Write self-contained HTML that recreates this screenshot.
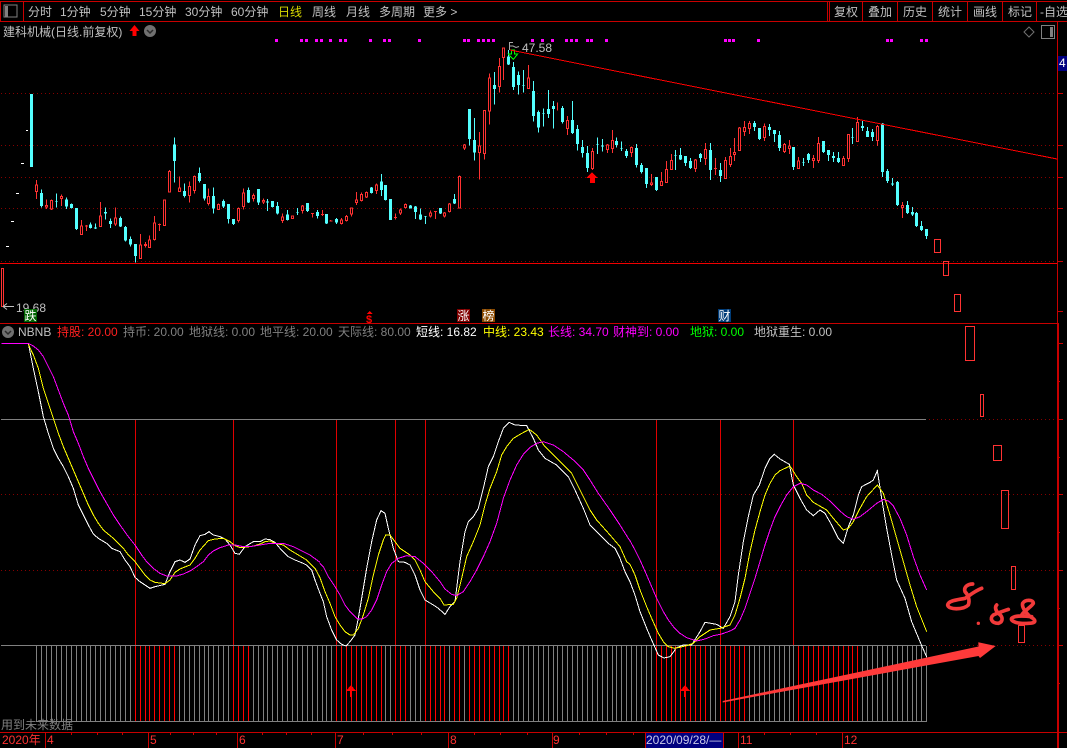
<!DOCTYPE html>
<html lang="zh">
<head>
<meta charset="utf-8">
<title>建科机械</title>
<style>
html,body{margin:0;padding:0;background:#000;width:1067px;height:748px;overflow:hidden}
svg{display:block}
text{font-family:"Liberation Sans","WenQuanYi Zen Hei","Noto Sans CJK SC",sans-serif;font-size:12px;fill:#c0c0c0;white-space:pre}
.c{shape-rendering:crispEdges}
</style>
</head>
<body>
<svg width="1067" height="748" viewBox="0 0 1067 748" xmlns="http://www.w3.org/2000/svg">
<rect width="1067" height="748" fill="#000"/>

<!-- frame / toolbar -->
<g class="c" fill="none" stroke="#c80000">
<path d="M0 1.500H1067M0 21.500H1067M0.500 1V21M23.500 1V21M827.500 2V21M829.500 2V21M862.500 2V21M897.500 2V21M932.500 2V21M967.500 2V21M1002.500 2V21M1036.500 2V21"/>
<path d="M1057.500 22V323"/>
<path d="M0 323.500H1058"/>
<path d="M1058 323V748" stroke-width="2"/>
<path d="M0 263.500H1057" stroke="#f00000"/>
<path d="M0 732.500H1067"/>
<path d="M45.500 732V748M148.500 732V748M237.500 732V748M335.500 732V748M448.500 732V748M552.500 732V748M645.500 732V748M723.500 732V748M738.500 732V748M842.500 732V748"/>
<path d="M71.500 732V735M97.500 732V735M122.500 732V735M170.500 732V735M193.500 732V735M216.500 732V735M262.500 732V735M286.500 732V735M311.500 732V735M363.500 732V735M392.500 732V735M421.500 732V735M474.500 732V735M500.500 732V735M527.500 732V735M579.500 732V735M606.500 732V735M633.500 732V735M764.500 732V735M790.500 732V735M816.500 732V735"/>
<path d="M1058 93.500H1063M1058 145.500H1063M1058 177.500H1063M1058 208.500H1063M1058 261.500H1063M1058 311.500H1063M1058 343.500H1063M1058 381.500H1060M1058 419.500H1063M1058 457.500H1060M1058 494.500H1063M1058 532.500H1060M1058 570.500H1063M1058 608.500H1060M1058 645.500H1063M1058 683.500H1060"/>
</g>

<!-- toolbar icon -->
<g class="c">
<rect x="4" y="5" width="13" height="12" fill="none" stroke="#808080"/>
<rect x="5" y="6" width="3" height="11" fill="#808080"/>
</g>

<!-- toolbar text -->
<text x="28" y="16">分时</text>
<text x="60" y="16">1分钟</text>
<text x="100" y="16">5分钟</text>
<text x="139" y="16">15分钟</text>
<text x="185" y="16">30分钟</text>
<text x="231" y="16">60分钟</text>
<text x="278" y="16" style="fill:#d8d800">日线</text>
<text x="312" y="16">周线</text>
<text x="346" y="16">月线</text>
<text x="379" y="16">多周期</text>
<text x="423" y="16">更多 &gt;</text>
<text x="834" y="16">复权</text>
<text x="868" y="16">叠加</text>
<text x="903" y="16">历史</text>
<text x="938" y="16">统计</text>
<text x="973" y="16">画线</text>
<text x="1008" y="16">标记</text>
<text x="1040" y="16">-自选</text>

<!-- title row -->
<text x="3" y="36">建科机械(日线.前复权)</text>
<path d="M134.500 25L139.500 31H136.500V36H132.500V31H129.500Z" fill="#f00"/>
<circle cx="150" cy="31" r="6" fill="#707070"/>
<path d="M147 30L150 33L153 30" fill="none" stroke="#2a2a2a" stroke-width="1.500"/>
<path d="M1029 27L1034 32L1029 37L1024 32Z" fill="none" stroke="#707070"/>
<g class="c">
<rect x="1041.500" y="25.500" width="13" height="13" fill="none" stroke="#808080"/>
<rect x="1050" y="27" width="3" height="10" fill="#808080"/>
</g>

<!-- magenta dots -->
<path class="c" fill="#f0f" d="M275 39h3v3h-3zM300 39h3v3h-3zM305 39h3v3h-3zM315 39h3v3h-3zM320 39h3v3h-3zM329 39h3v3h-3zM339 39h3v3h-3zM344 39h3v3h-3zM369 39h3v3h-3zM383 39h3v3h-3zM388 39h3v3h-3zM418 39h3v3h-3zM463 39h3v3h-3zM467 39h3v3h-3zM477 39h3v3h-3zM482 39h3v3h-3zM487 39h3v3h-3zM492 39h3v3h-3zM531 39h3v3h-3zM541 39h3v3h-3zM551 39h3v3h-3zM565 39h3v3h-3zM570 39h3v3h-3zM575 39h3v3h-3zM586 39h3v3h-3zM590 39h3v3h-3zM605 39h3v3h-3zM724 39h3v3h-3zM728 39h3v3h-3zM732 39h3v3h-3zM757 39h3v3h-3zM886 39h3v3h-3zM890 39h3v3h-3zM920 39h3v3h-3zM925 39h3v3h-3z"/>

<!-- grid -->
<path class="c" d="M1 93.500H1057M1 145.500H1057M1 177.500H1057M1 208.500H1057M1 261.500H1057M1 419.500H1057M1 494.500H1057M1 570.500H1057M1 645.500H1057" fill="none" stroke="#860000" stroke-dasharray="1 3"/>

<!-- leading big bar and white dots -->
<g class="c">
<rect x="30" y="94" width="3" height="73" fill="#54ffff"/>
<path fill="#fff" d="M26 130h2v1h-2zM21 163h3v1h-3zM16 193h3v1h-3zM11 221h3v1h-3zM6 246h3v1h-3z"/>
<rect x="1.500" y="268.500" width="2" height="38" fill="#000" stroke="#ff3232"/>
</g>

<!-- candles section 1 -->
<g class="c" transform="translate(0,130) scale(.33333)" fill="none">
<path stroke="#ff3232" stroke-width="3" d="M109 150V207M139 208V237M154 208V240M184 193V228M244 270V315M259 285V303M301 216V290M346 232V288M421 312V387M436 336V352M448 317V353M463 258V332M478 280V303M493 208V287M508 120V187M538 139V185M568 155V218M583 136V190M625 175V226M655 221V240M715 232V278M730 175V238M760 190V215M790 205V222M847 250V279M877 256V266M907 225V251M937 250V263M967 240V258M992 270V275M1024 264V283M1039 255V274M1054 232V260M1069 186V225M1084 188V215M1099 184V204M1129 160V192M1186 250V269M1201 236V255M1216 220V236M1291 241V263M1306 243V267M1333 246V263M1348 219V247M1378 136V235M1393 42V60"/>
<path stroke="#ff3232" stroke-width="3" fill="#000" d="M106 165h6V184h-6zM136 227h6V231h-6zM151 212h6V237h-6zM181 200h6V205h-6zM241 288h6V314h-6zM298 258h6V289h-6zM343 264h6V282h-6zM418 345h6V386h-6zM433 343h6V347h-6zM445 330h6V352h-6zM460 279h6V329h-6zM490 210h6V286h-6zM505 124h6V186h-6zM535 174h6V184h-6zM565 170h6V196h-6zM580 139h6V182h-6zM622 200h6V221h-6zM652 224h6V238h-6zM712 236h6V271h-6zM727 189h6V230h-6zM757 197h6V206h-6zM787 212h6V216h-6zM844 261h6V272h-6zM874 258h6V265h-6zM904 228h6V242h-6zM1021 270h6V280h-6zM1036 260h6V271h-6zM1051 234h6V252h-6zM1066 210h6V218h-6zM1081 194h6V212h-6zM1096 188h6V201h-6zM1126 165h6V181h-6zM1198 240h6V249h-6zM1213 223h6V232h-6zM1288 249h6V258h-6zM1330 249h6V258h-6zM1345 222h6V245h-6zM1375 139h6V234h-6zM1390 45h6V54h-6z"/>
<path stroke="#ff3232" stroke-width="3" d="M255 288h9M474 283h9M933 250h9M963 253h9M988 273h9M1182 262h9M1302 244h9"/>
<path stroke="#54ffff" stroke-width="3" d="M124 178V232M169 190V233M199 203V237M214 220V235M229 234V300M271 277V296M286 280V297M316 233V268M331 266V294M361 260V291M376 288V334M391 320V350M406 342V398M523 22V158M553 160V202M598 112V158M613 162V212M640 172V251M670 209V234M685 222V281M700 267V285M745 172V219M775 177V225M802 207V243M817 213V232M832 216V253M862 240V272M892 234V255M922 219V246M952 240V265M980 252V282M1009 264V282M1114 171V190M1144 132V198M1156 165V212M1171 207V270M1231 225V236M1246 228V267M1261 235V270M1276 258V282M1321 234V252M1363 192V222"/>
<path stroke="#54ffff" stroke-width="9" d="M124 189V228M169 213V215M199 208V229M214 222V234M229 234V297M271 283V294M286 293V295M316 246V251M331 273V282M361 264V290M376 291V332M391 327V344M406 342V378M523 43V93M553 183V198M598 129V153M613 162V205M640 198V236M670 213V229M685 222V267M700 267V282M745 180V217M775 177V217M802 215V217M817 213V231M832 228V251M862 253V270M892 246V248M922 219V243M952 246V258M980 252V281M1009 267V277M1114 172V189M1144 154V180M1156 165V210M1171 207V270M1231 226V235M1246 229V246M1261 253V268M1276 258V260M1321 234V251M1363 207V221"/>
</g>

<!-- candles section 2 -->
<g class="c" transform="translate(460,40) scale(.33333)" fill="none">
<path stroke="#ff3232" stroke-width="3" d="M58 276V419M73 210V358M88 100V254M118 54V158M130 22V120M205 75V147M292 187V212M322 228V285M397 324V390M442 312V339M457 270V339M514 319V351M574 402V438M604 396V438M619 363V429M634 342V390M706 357V396M736 309V375M766 354V405M796 351V417M811 324V381M823 294V363M838 261V333M853 243V288M868 243V282M913 250V303M973 309V339M988 300V342M1015 351V387M1060 345V384M1075 291V369M1150 348V378M1165 282V366M1192 231V305M1252 255V318M1327 486V534"/>
<path stroke="#ff3232" stroke-width="3" fill="#000" d="M55 318h6V337h-6zM70 212h6V341h-6zM85 114h6V213h-6zM115 80h6V139h-6zM127 24h6V52h-6zM202 114h6V146h-6zM319 242h6V266h-6zM394 335h6V386h-6zM439 315h6V329h-6zM454 302h6V326h-6zM511 323h6V338h-6zM571 429h6V434h-6zM601 425h6V437h-6zM616 389h6V428h-6zM631 362h6V389h-6zM703 360h6V386h-6zM733 329h6V356h-6zM793 362h6V416h-6zM808 350h6V374h-6zM820 338h6V344h-6zM835 264h6V332h-6zM850 263h6V275h-6zM865 251h6V266h-6zM910 260h6V293h-6zM970 314h6V335h-6zM985 318h6V325h-6zM1012 363h6V386h-6zM1057 356h6V361h-6zM1072 311h6V362h-6zM1147 356h6V377h-6zM1162 284h6V356h-6zM1189 248h6V304h-6zM1249 260h6V302h-6zM1324 497h6V503h-6z"/>
<path stroke="#ff3232" stroke-width="3" d="M762 386h9"/>
<path stroke="#54ffff" stroke-width="3" d="M28 207V316M43 234V362M103 96V194M145 30V75M160 66V150M175 94V164M190 90V158M220 123V244M235 211V278M250 205V260M265 150V234M280 183V266M307 198V250M337 183V282M352 255V332M367 300V353M382 318V396M412 292V342M427 297V335M469 293V322M484 304V333M499 327V354M529 312V382M544 369V401M559 384V444M589 411V453M646 330V390M661 324V360M676 348V378M691 354V387M721 339V366M751 309V420M781 369V426M883 243V273M898 264V300M928 252V288M943 270V306M958 273V333M1001 321V390M1030 354V378M1045 339V369M1090 303V339M1105 330V363M1120 336V366M1135 336V369M1177 264V312M1207 243V273M1222 261V291M1237 267V303M1267 249V411M1282 387V429M1297 414V438M1312 423V498M1342 483V522M1357 501V528M1369 516V561M1384 543V573M1399 567V597"/>
<path stroke="#54ffff" stroke-width="9" d="M28 207V297M43 300V338M103 135V147M145 50V73M160 81V141M175 105V135M190 135V137M220 153V228M235 216V263M250 219V221M265 207V222M280 198V207M307 204V246M337 240V279M352 267V312M367 321V339M382 339V384M412 312V314M427 316V320M469 303V315M484 324V326M499 333V348M529 324V375M544 375V396M559 384V432M589 411V450M646 345V347M661 345V358M676 348V369M691 363V384M721 342V354M751 330V390M781 390V408M883 249V261M898 264V297M928 261V270M943 270V282M958 285V324M1001 321V381M1030 366V368M1045 342V360M1090 303V336M1105 330V345M1120 348V354M1135 354V366M1177 291V293M1207 258V264M1222 273V291M1237 276V291M1267 250V396M1282 393V423M1297 430V433M1312 426V495M1342 495V519M1357 516V524M1369 519V558M1384 558V570M1399 567V588"/>
<path stroke="#0f0" stroke-width="3" fill="none" d="M154 30V42H145L160 58L173 42H164V30Z"/>
</g>

<!-- red up arrow under candles -->
<path class="c" fill="#f00" d="M592 172L597.500 178H595V183H590V178H586.500Z"/>

<!-- flag + peak label -->
<path d="M509.500 42V50M509.500 42.500H513M509.500 46H513L516 47.500L519 46.500" fill="none" stroke="#a8a8a8"/>
<text x="522" y="52">47.58</text>

<!-- trend line -->
<path class="c" d="M510 50L1057 159" stroke="#f00" stroke-width="1" fill="none"/>

<!-- future hollow candles -->
<g class="c" fill="none" stroke="#ff3232">
<rect x="934.500" y="239.500" width="6" height="13"/>
<rect x="943.500" y="261.500" width="5" height="14"/>
<rect x="954.500" y="294.500" width="6" height="17"/>
<rect x="965.500" y="326.500" width="9" height="34"/>
<rect x="980.500" y="394.500" width="3" height="22"/>
<rect x="993.500" y="445.500" width="8" height="15"/>
<rect x="1001.500" y="490.500" width="7" height="38"/>
<rect x="1011.500" y="566.500" width="4" height="23"/>
<rect x="1018.500" y="625.500" width="6" height="17"/>
</g>

<!-- left pane marker -->
<path d="M3 306.500H14M3 306.500L7 303.500M3 306.500L7 309.500" fill="none" stroke="#c0c0c0"/>
<text x="16" y="312">19.68</text>

<!-- signal tags -->
<g class="c">
<rect x="24" y="309" width="13" height="13" fill="#006400"/>
<rect x="457" y="309" width="13" height="13" fill="#800000"/>
<rect x="482" y="309" width="13" height="13" fill="#8b4a00"/>
<rect x="718" y="309" width="13" height="13" fill="#003c78"/>
<path fill="#f00" d="M369.500 311L372.500 314H366.500Z"/>
</g>
<text x="24.500" y="320" style="fill:#fff">跌</text>
<text x="457.500" y="320" style="fill:#fff">涨</text>
<text x="482.500" y="320" style="fill:#fff">榜</text>
<text x="718.500" y="320" style="fill:#fff">财</text>
<text x="366" y="323" style="fill:#f00;font-weight:bold;font-size:11px">$</text>

<!-- indicator header -->
<circle cx="8" cy="332" r="6" fill="#707070"/>
<path d="M5 331L8 334L11 331" fill="none" stroke="#2a2a2a" stroke-width="1.500"/>
<text x="18" y="336">NBNB</text>
<text x="57" y="336" style="fill:#ff2020">持股: 20.00</text>
<text x="123" y="336" style="fill:#808080">持币: 20.00</text>
<text x="189" y="336" style="fill:#808080">地狱线: 0.00</text>
<text x="260" y="336" style="fill:#808080">地平线: 20.00</text>
<text x="338" y="336" style="fill:#808080">天际线: 80.00</text>
<text x="416" y="336" style="fill:#fff">短线: 16.82</text>
<text x="483" y="336" style="fill:#ff0">中线: 23.43</text>
<text x="548" y="336" style="fill:#f0f">长线: 34.70</text>
<text x="613" y="336" style="fill:#f0f">财神到: 0.00</text>
<text x="690" y="336" style="fill:#0f0">地狱: 0.00</text>
<text x="754" y="336" style="fill:#c0c0c0">地狱重生: 0.00</text>

<!-- indicator structure -->
<g class="c" fill="none">
<path stroke="#808080" d="M1 419.500H926M1 645.500H926M36 721.500H927"/>
<path stroke="#e00000" d="M135.500 420V645M233.500 420V645M336.500 420V645M395.500 420V645M425.500 420V645M656.500 420V645M720.500 420V645M793.500 420V645"/>
<path stroke="#808080" d="M36.500 646v75M41.500 646v75M46.500 646v75M51.500 646v75M56.500 646v75M61.500 646v75M66.500 646v75M71.500 646v75M76.500 646v75M81.500 646v75M86.500 646v75M90.500 646v75M95.500 646v75M100.500 646v75M105.500 646v75M110.500 646v75M115.500 646v75M120.500 646v75M125.500 646v75M130.500 646v75M179.500 646v75M184.500 646v75M189.500 646v75M194.500 646v75M199.500 646v75M204.500 646v75M208.500 646v75M213.500 646v75M218.500 646v75M223.500 646v75M228.500 646v75M253.500 646v75M258.500 646v75M263.500 646v75M267.500 646v75M272.500 646v75M277.500 646v75M282.500 646v75M287.500 646v75M292.500 646v75M297.500 646v75M302.500 646v75M307.500 646v75M312.500 646v75M317.500 646v75M322.500 646v75M326.500 646v75M331.500 646v75M385.500 646v75M390.500 646v75M410.500 646v75M415.500 646v75M420.500 646v75M449.500 646v75M464.500 646v75M513.500 646v75M518.500 646v75M523.500 646v75M528.500 646v75M533.500 646v75M538.500 646v75M543.500 646v75M548.500 646v75M553.500 646v75M557.500 646v75M562.500 646v75M567.500 646v75M572.500 646v75M577.500 646v75M582.500 646v75M587.500 646v75M592.500 646v75M597.500 646v75M602.500 646v75M607.500 646v75M612.500 646v75M616.500 646v75M621.500 646v75M626.500 646v75M631.500 646v75M636.500 646v75M641.500 646v75M646.500 646v75M651.500 646v75M710.500 646v75M715.500 646v75M749.500 646v75M754.500 646v75M759.500 646v75M764.500 646v75M769.500 646v75M774.500 646v75M779.500 646v75M784.500 646v75M789.500 646v75M793.500 646v75M862.500 646v75M867.500 646v75M872.500 646v75M877.500 646v75M882.500 646v75M887.500 646v75M892.500 646v75M897.500 646v75M902.500 646v75M907.500 646v75M912.500 646v75M916.500 646v75M921.500 646v75M926.500 646v75"/>
<path stroke="#f00" d="M135.500 646v75M140.500 646v75M145.500 646v75M149.500 646v75M154.500 646v75M159.500 646v75M164.500 646v75M169.500 646v75M174.500 646v75M233.500 646v75M238.500 646v75M243.500 646v75M248.500 646v75M336.500 646v75M341.500 646v75M346.500 646v75M351.500 646v75M356.500 646v75M361.500 646v75M366.500 646v75M371.500 646v75M376.500 646v75M381.500 646v75M395.500 646v75M400.500 646v75M405.500 646v75M425.500 646v75M430.500 646v75M435.500 646v75M440.500 646v75M444.500 646v75M454.500 646v75M459.500 646v75M469.500 646v75M474.500 646v75M479.500 646v75M484.500 646v75M489.500 646v75M494.500 646v75M499.500 646v75M503.500 646v75M508.500 646v75M656.500 646v75M661.500 646v75M666.500 646v75M671.500 646v75M675.500 646v75M680.500 646v75M685.500 646v75M690.500 646v75M695.500 646v75M700.500 646v75M705.500 646v75M720.500 646v75M725.500 646v75M730.500 646v75M734.500 646v75M739.500 646v75M744.500 646v75M798.500 646v75M803.500 646v75M808.500 646v75M813.500 646v75M818.500 646v75M823.500 646v75M828.500 646v75M833.500 646v75M838.500 646v75M843.500 646v75M848.500 646v75M852.500 646v75M857.500 646v75"/>
</g>

<!-- indicator lines -->
<g fill="none" class="c">
<g transform="translate(0,335) scale(.33333)" stroke-width="3">
<polyline stroke="#fff" points="85,25 100,100 115,170 130,245 145,295 160,340 175,370 190,395 205,425 220,460 235,510 250,540 265,570 280,597 295,610 320,625 335,640 360,650 375,675 390,695 405,727 420,740 450,760 465,755 495,748 510,710 525,680 540,675 555,682 570,672 585,630 600,602 615,598 627,590 640,600 660,605 675,612 690,630 705,655 718,658 735,635 760,620 780,620 795,612 810,614 825,622 840,640 865,665 885,675 905,683 920,690 935,705 945,735 960,775"/>
<polyline stroke="#ff0" points="85,28 100,60 115,100 130,160 145,205 160,250 175,295 190,335 205,370 220,405 235,440 250,475 265,510 280,540 295,565 310,585 340,610 355,625 370,640 385,660 405,680 420,700 435,720 450,735 465,742 495,746 510,735 525,712 540,702 570,690 585,670 600,645 625,617 645,612 670,610 690,620 705,632 720,638 750,635 765,632 780,627 795,620 810,618 825,625 850,630 870,645 890,657 920,675 945,700 960,728"/>
<polyline stroke="#f0f" points="5,25 85,25 100,33 115,45 130,65 145,95 160,125 175,165 190,205 205,240 220,290 235,325 250,365 265,400 280,430 300,470 320,505 340,540 360,570 385,605 405,630 425,660 440,680 460,700 480,715 500,723 530,723 550,717 570,708 590,695 610,680 625,660 640,648 660,638 685,630 705,630 730,635 750,635 780,630 810,625 850,625 880,635 900,645 930,660 960,682"/>
</g>
<g transform="translate(320,335) scale(.33333)" stroke-width="3">
<polyline stroke="#fff" points="0,775 10,800 20,845 35,885 50,915 65,928 78,933 90,920 105,900 115,850 125,790 140,700 155,620 170,555 183,527 195,535 205,580 220,640 235,680 255,682 270,690 285,720 300,765 315,795 340,810 355,820 375,838 390,815 405,800 420,680 435,590 445,560 460,545 475,520 490,460 505,395 520,365 535,320 550,280 567,262 585,270 620,272 640,310 655,345 675,370 710,390 745,425 765,465 790,520 810,570 840,600 865,625 885,640 900,670 915,710 930,740"/>
<polyline stroke="#ff0" points="0,728 15,770 30,805 45,845 60,870 75,890 90,900 100,900 115,880 130,840 145,790 160,720 175,660 190,615 197,600 210,600 225,620 240,640 270,660 285,675 300,705 315,740 340,770 360,790 372,810 400,808 410,790 425,730 440,665 460,620 480,570 495,510 510,460 530,410 545,360 560,335 580,310 600,298 628,283 650,300 675,335 710,370 755,415 770,445 790,485 810,525 830,555 870,600 900,635 920,680 930,688"/>
<polyline stroke="#f0f" points="0,685 10,695 25,725 45,755 60,780 75,810 90,830 110,850 125,853 140,845 155,825 170,795 185,750 200,710 215,685 235,670 260,662 285,665 310,685 335,710 360,740 375,762 395,778 410,782 430,770 450,740 470,705 490,665 510,620 530,565 550,490 570,435 590,390 610,358 630,337 650,325 670,320 700,330 730,350 760,375 790,405 810,435 835,475 870,525 900,570 925,610 930,617"/>
</g>
<g transform="translate(630,335) scale(.33333)" stroke-width="3">
<polyline stroke="#fff" points="0,740 15,780 30,830 50,880 65,915 85,960 102,969 120,965 135,945 135,940 160,930 185,930 210,890 225,862 260,868 280,880 300,845 315,800 325,720 340,620 355,545 370,480 388,450 405,400 420,370 433,358 450,372 478,388 490,450 510,490 530,525 550,542 570,525 585,535 605,570 625,610 640,625 655,575 670,540 685,480 695,455 720,442 730,435 742,407 755,490 770,580 785,660 800,735 825,790 845,860 870,920 890,966"/>
<polyline stroke="#ff0" points="0,688 15,720 30,765 50,815 65,850 85,895 100,920 115,935 135,940 170,932 190,925 210,905 240,885 270,880 300,870 315,840 330,790 345,730 360,650 375,585 390,530 405,480 420,445 435,420 450,407 480,393 500,425 515,445 530,480 550,502 590,525 610,550 640,585 655,580 670,560 690,520 710,485 742,450 760,475 780,540 800,610 820,680 840,750 860,815 890,890"/>
<polyline stroke="#f0f" points="0,617 15,645 30,675 50,720 65,755 80,790 100,830 115,855 130,875 150,895 170,908 200,918 225,912 250,902 275,897 300,888 315,880 330,855 345,820 360,775 375,730 390,680 405,630 420,585 435,545 450,515 470,480 490,455 510,445 530,450 550,465 575,478 600,498 630,528 650,545 670,553 690,545 710,530 740,505 760,493 775,498 790,513 810,550 830,600 850,665 870,720 890,765"/>
</g>
</g>

<!-- small up arrows in histogram -->
<path class="c" fill="#f00" d="M351 685L356 691H352V697H350V691H346ZM685 685L690 691H686V697H684V691H680Z"/>

<!-- annotation arrow -->
<polygon fill="#ff3a3a" points="722.700,701 978.500,646.500 978.300,642.300 995.700,646 980,658 978.500,656 722.700,702.500"/>

<!-- handwritten scribble -->
<g transform="translate(620,560) scale(.33333)" fill="none" stroke="#f23a3a" stroke-width="11" stroke-linecap="round" stroke-linejoin="round">
<title>8.88</title>
<path d="M1085 85C1060 95 1045 110 1035 115C1010 120 985 122 983 135C985 150 1030 150 1045 135C1050 120 1045 105 1035 95C1030 80 1045 72 1058 72"/>
<path d="M1165 148C1145 155 1130 160 1120 165C1108 175 1115 190 1135 190C1150 185 1150 170 1135 160C1125 150 1125 140 1130 135"/>
<path d="M1205 165C1215 150 1235 140 1240 130C1240 118 1215 118 1208 130C1205 140 1215 155 1230 170C1250 180 1250 190 1225 190C1195 192 1170 185 1175 175C1185 165 1215 168 1235 170"/>
<circle cx="1075" cy="190" r="5" fill="#f23a3a" stroke="none"/>
</g>

<!-- note text -->
<text x="1" y="729" style="fill:#808080">用到未来数据</text>

<!-- time axis text -->
<g>
<text x="2" y="744" style="fill:#ff3232">2020年</text>
<text x="47" y="744" style="fill:#ff3232">4</text>
<text x="150" y="744" style="fill:#ff3232">5</text>
<text x="239" y="744" style="fill:#ff3232">6</text>
<text x="337" y="744" style="fill:#ff3232">7</text>
<text x="450" y="744" style="fill:#ff3232">8</text>
<text x="553" y="744" style="fill:#ff3232">9</text>
<text x="740" y="744" style="fill:#ff3232">11</text>
<text x="844" y="744" style="fill:#ff3232">12</text>
</g>
<rect class="c" x="646" y="733" width="77" height="15" fill="#000080"/>
<text x="646" y="744" style="fill:#c8c8e8">2020/09/28/—</text>

<!-- right axis price tag -->
<rect class="c" x="1058" y="56" width="9" height="15" fill="#000080"/>
<text x="1059" y="67" style="fill:#fff">4</text>
</svg>
</body>
</html>
